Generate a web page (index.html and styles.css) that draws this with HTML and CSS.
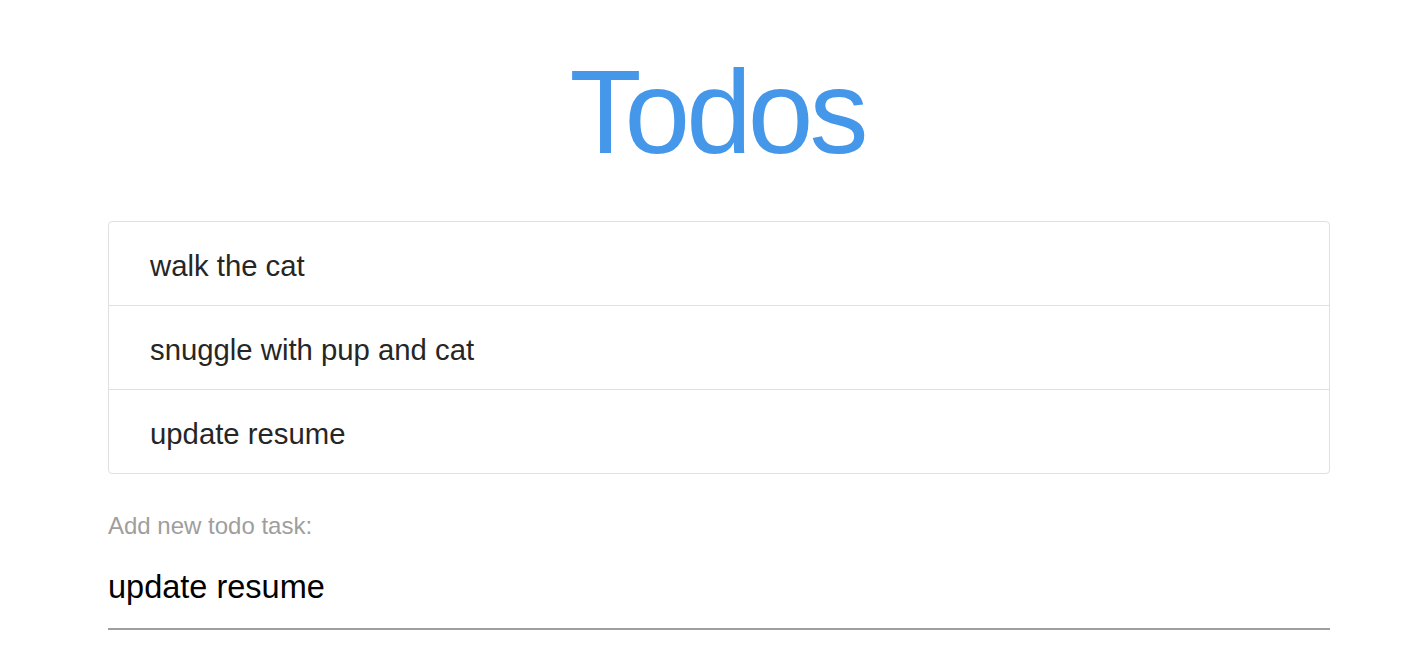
FILE: index.html
```html
<!DOCTYPE html>
<html>
<head>
<meta charset="utf-8">
<title>Todos</title>
<link rel="stylesheet" href="styles.css">
</head>
<body>
<div class="app">
  <h1 class="title">Todos</h1>
  <ul class="collection">
    <li class="item">walk the cat</li>
    <li class="item">snuggle with pup and cat</li>
    <li class="item">update resume</li>
  </ul>
  <form class="add-form">
    <label class="label" for="todo">Add new todo task:</label>
    <input class="field" id="todo" type="text" value="update resume">
  </form>
</div>
</body>
</html>
```
FILE: styles.css
```css
html, body {
  margin: 0;
  padding: 0;
  background: #fff;
}
body {
  font-family: "Liberation Sans", Arial, sans-serif;
}
.app {
  margin: 0 98px 0 108px;
  padding-top: 52px;
}
.title {
  margin: 0;
  font-size: 118px;
  line-height: 120px;
  font-weight: 400;
  color: #4597ea;
  text-align: center;
  letter-spacing: -4px;
  padding-right: 4px;
}
.collection {
  list-style: none;
  margin: 49px 0 0 0;
  padding: 0;
  border: 1px solid #e0e0e0;
  border-radius: 4px;
}
.item {
  height: 83px;
  line-height: 87px;
  padding: 0 41px;
  font-size: 29.3px;
  color: #262626;
  border-bottom: 1px solid #e0e0e0;
  overflow: hidden;
}
.item:last-child {
  border-bottom: none;
}
.add-form {
  margin-top: 40px;
}
.label {
  display: block;
  font-size: 24px;
  line-height: 24px;
  color: #9e9e9e;
}
.field {
  display: block;
  box-sizing: content-box;
  width: 100%;
  margin: 25px 0 0 0;
  height: 48px;
  padding: 0 0 17px 0;
  border: none;
  border-bottom: 2px solid #9e9e9e;
  font-family: "Liberation Sans", Arial, sans-serif;
  font-size: 32.5px;
  color: #000;
  background: transparent;
  outline: none;
}
```
